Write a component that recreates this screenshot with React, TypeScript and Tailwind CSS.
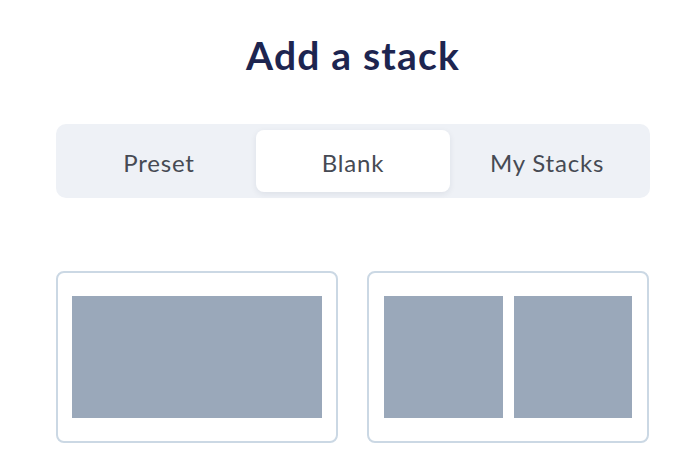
import { useState } from 'react';

const tabs = ['Preset', 'Blank', 'My Stacks'];

function SingleLayout() {
  return <div className="h-full bg-[#9aa8ba]" />;
}

function SplitLayout() {
  return (
    <div className="flex h-full gap-[11px]">
      <div className="flex-1 bg-[#9aa8ba]" />
      <div className="flex-1 bg-[#9aa8ba]" />
    </div>
  );
}

export default function App() {
  const [active, setActive] = useState('Blank');

  return (
    <div className="min-h-[458px] bg-white font-['Lato','Noto_Sans',sans-serif]">
      <div className="ml-[56px] w-[594px] pt-[32px]">
        <h1 className="text-center text-[39px] font-bold leading-[46px] tracking-[1.2px] text-[#1d2550]">Add a stack</h1>

        <div className="mt-[46px] grid grid-cols-3 rounded-[10px] bg-[#eef1f6] p-[6px]">
          {tabs.map((t) => (
            <button
              key={t}
              onClick={() => setActive(t)}
              className={
                t === active
                  ? 'h-[62px] rounded-[8px] bg-white pt-[3px] text-[24px] tracking-[0.8px] text-[#464a53] shadow-[0_2px_6px_rgba(30,40,70,0.08)]'
                  : 'h-[62px] rounded-[8px] pt-[3px] text-[24px] tracking-[0.8px] text-[#464a53]'
              }
            >
              {t}
            </button>
          ))}
        </div>

        <div className="mt-[73px] grid grid-cols-[282px_282px] gap-[29px]">
          <div className="h-[172px] rounded-[8px] border-2 border-[#cbd8e4] px-[14px] py-[23px]">
            <SingleLayout />
          </div>
          <div className="h-[172px] rounded-[8px] border-2 border-[#cbd8e4] px-[15px] py-[23px]">
            <SplitLayout />
          </div>
        </div>
      </div>
    </div>
  );
}
